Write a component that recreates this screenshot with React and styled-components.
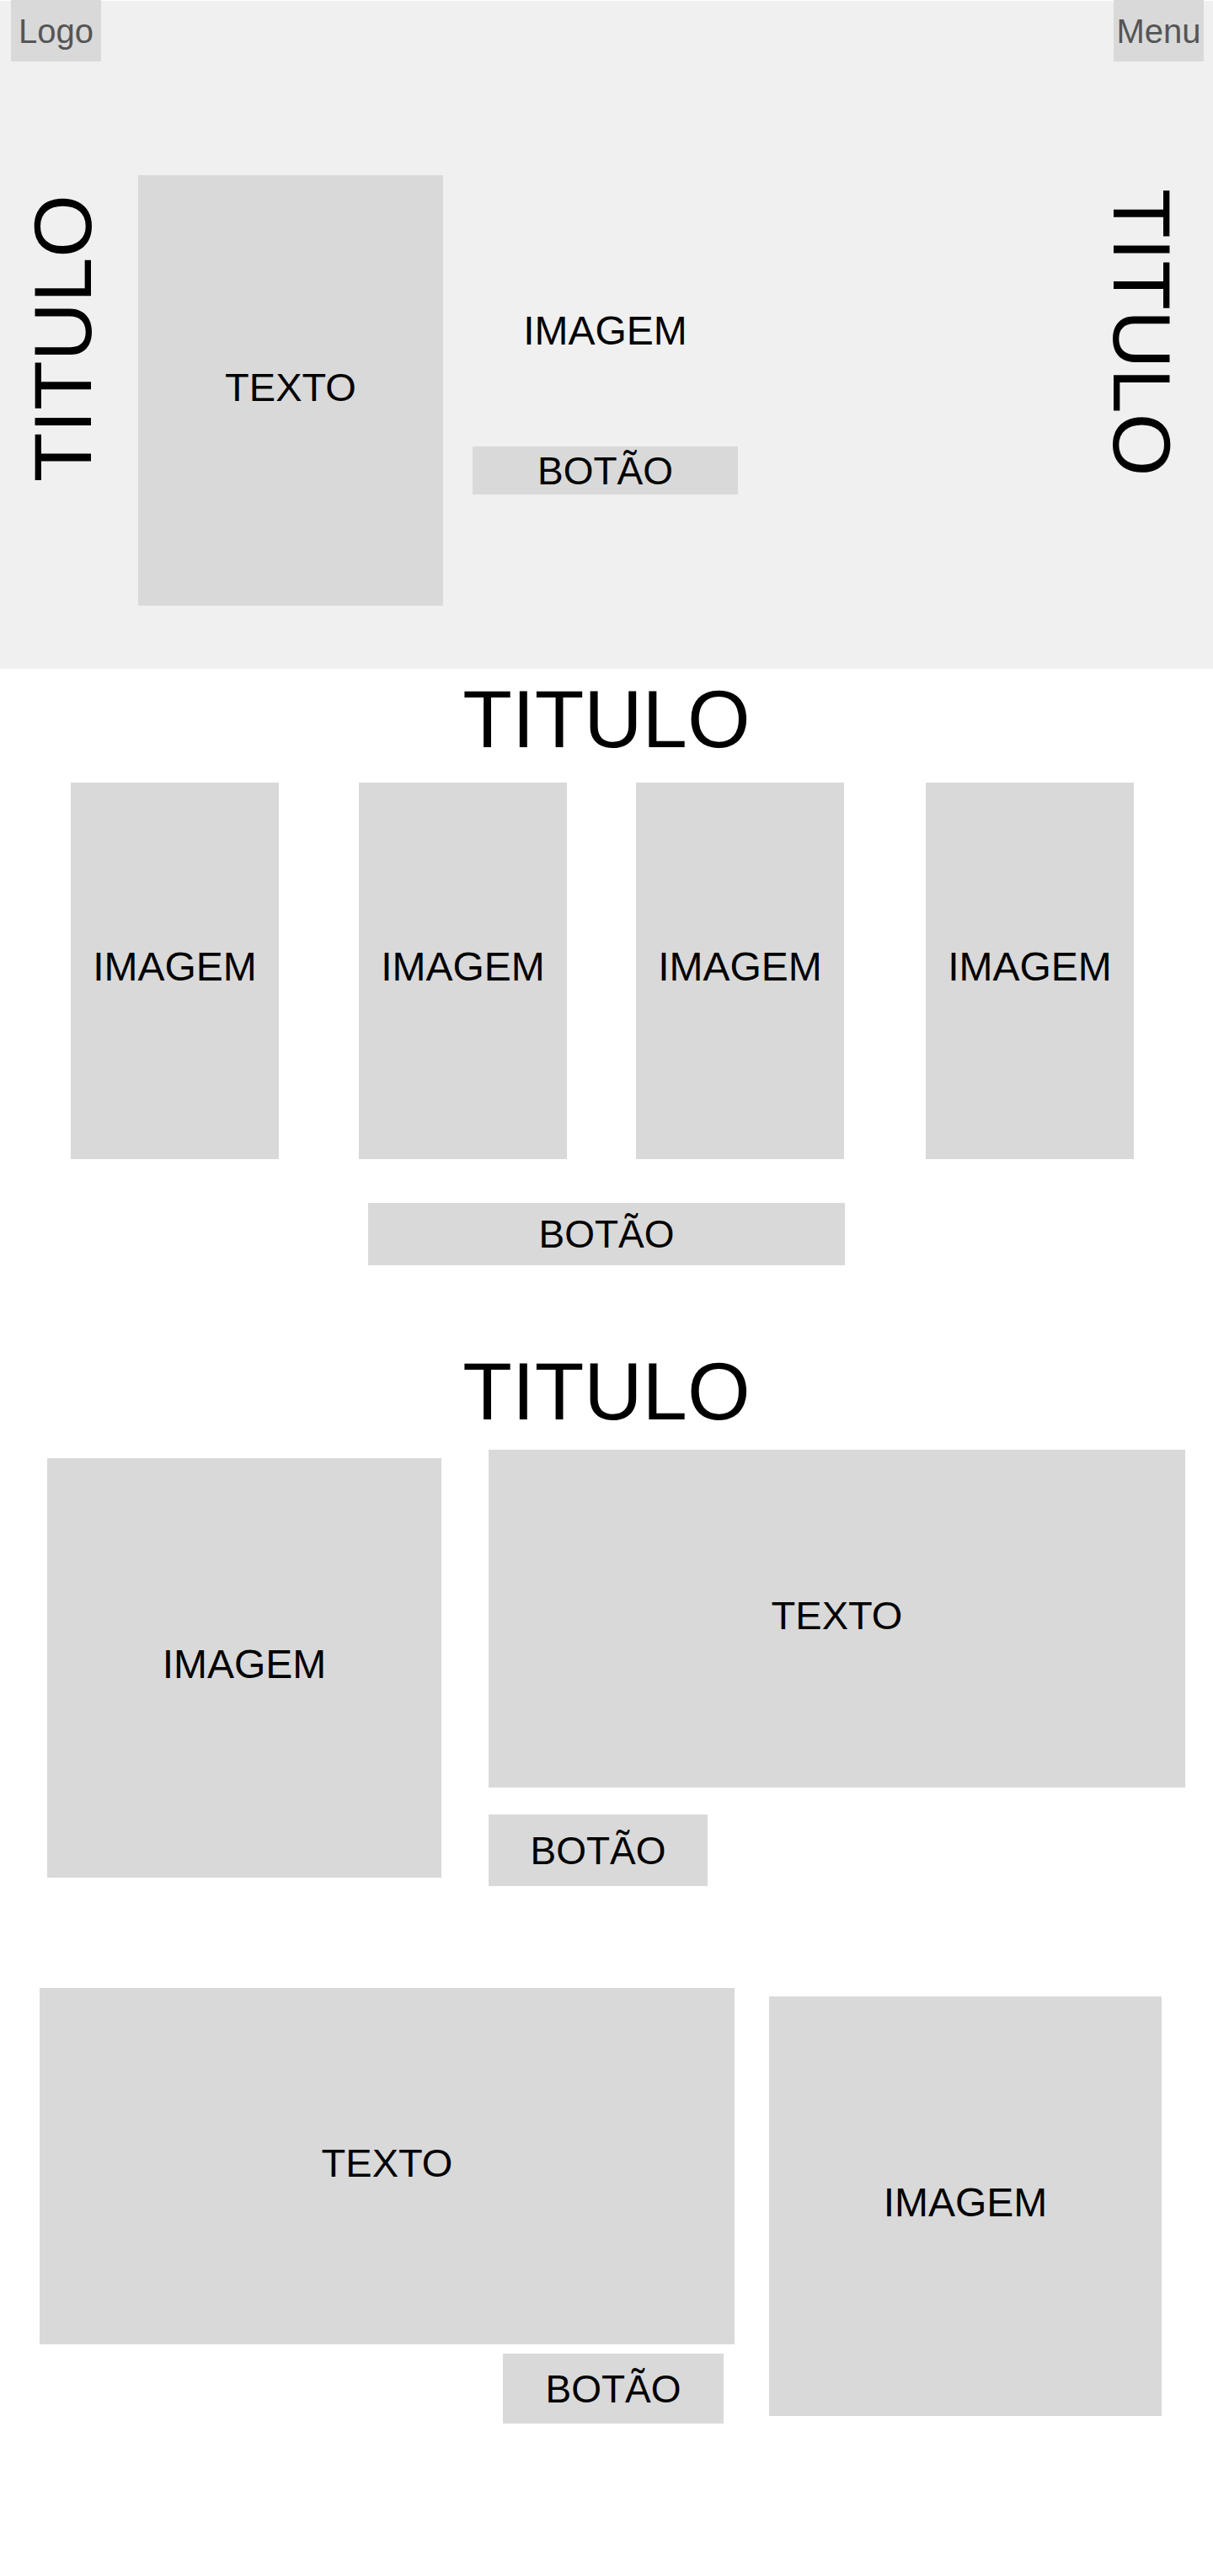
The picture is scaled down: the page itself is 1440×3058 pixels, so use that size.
import React from "react";
import styled, { createGlobalStyle } from "styled-components";

const GlobalStyle = createGlobalStyle`
  html, body {
    margin: 0;
    padding: 0;
    background: #ffffff;
  }
  body {
    font-family: "Liberation Sans", Arial, sans-serif;
    color: #000000;
  }
  *, *::before, *::after {
    box-sizing: border-box;
  }
`;

const Page = styled.div`
  width: 1440px;
  min-height: 3058px;
  background: #ffffff;
  display: flex;
  flex-direction: column;
`;

/* ---------- Hero ---------- */

const Hero = styled.section`
  height: 794px;
  background: #f0f0f0;
  border-top: 1px solid #ffffff;
  display: flex;
  flex-direction: column;
`;

const TopBar = styled.header`
  display: flex;
  justify-content: space-between;
  align-items: flex-start;
  padding: 0 11px 0 13px;
  margin-top: -1px;
`;

const NavBox = styled.div`
  width: 107px;
  height: 73px;
  background: #d9d9d9;
  color: #555555;
  font-size: 40px;
  line-height: 1;
  display: flex;
  align-items: center;
  justify-content: center;
`;

const HeroBody = styled.div`
  flex: 1;
  display: flex;
  align-items: flex-start;
  padding: 0 50px 0 40px;
`;

const SideTitle = styled.h1`
  margin: ${(p) => p.$top}px 0 0 ${(p) => (p.$end ? "auto" : "0")};
  font-size: 96px;
  font-weight: 400;
  line-height: 70px;
  writing-mode: vertical-rl;
  transform: ${(p) => (p.$flip ? "rotate(180deg)" : "none")};
  white-space: nowrap;
`;

const HeroCenter = styled.div`
  width: 315px;
  margin: 296px 0 0 35px;
  display: flex;
  flex-direction: column;
  align-items: center;
`;

const FreeLabel = styled.span`
  font-size: 48px;
  line-height: 1;
  white-space: nowrap;
`;

/* ---------- Shared blocks ---------- */

const Block = styled.div`
  flex: none;
  width: ${(p) => p.$w}px;
  height: ${(p) => p.$h}px;
  margin-top: ${(p) => p.$mt || 0}px;
  margin-left: ${(p) => p.$ml || 0}px;
  padding-bottom: 9px;
  background: #d9d9d9;
  display: flex;
  align-items: center;
  justify-content: center;
`;

const BlockLabel = styled.span`
  font-size: ${(p) => p.$size || 48}px;
  line-height: 1;
  white-space: nowrap;
`;

const Button = styled.button`
  flex: none;
  width: ${(p) => p.$w}px;
  height: ${(p) => p.$h}px;
  margin-top: ${(p) => p.$mt || 0}px;
  margin-left: ${(p) => p.$ml || 0}px;
  padding: 0;
  border: none;
  border-radius: 0;
  background: #d9d9d9;
  color: #000000;
  font-family: "Liberation Sans", Arial, sans-serif;
  font-size: 46px;
  line-height: 1;
  display: flex;
  align-items: center;
  justify-content: center;
  cursor: pointer;
`;

const SectionTitle = styled.h2`
  margin: ${(p) => p.$mt}px 0 0;
  font-size: 96px;
  font-weight: 400;
  line-height: 1;
  text-align: center;
  white-space: nowrap;
`;

/* ---------- Gallery ---------- */

const Gallery = styled.section`
  display: flex;
  flex-direction: column;
  align-items: stretch;
`;

const CardRow = styled.div`
  display: flex;
  align-items: flex-start;
  padding: 0 0 0 84px;
  margin-top: 27px;
`;

const CenterRow = styled.div`
  display: flex;
  justify-content: center;
`;

/* ---------- Feature rows ---------- */

const Feature = styled.section`
  display: flex;
  flex-direction: column;
`;

const FeatureRow = styled.div`
  display: flex;
  align-items: flex-start;
  gap: ${(p) => p.$gap}px;
  padding-left: ${(p) => p.$pl}px;
  margin-top: ${(p) => p.$mt}px;
`;

const Column = styled.div`
  display: flex;
  flex-direction: column;
  align-items: flex-start;
`;

const cards = [
  { label: "IMAGEM", gap: 0 },
  { label: "IMAGEM", gap: 95 },
  { label: "IMAGEM", gap: 82 },
  { label: "IMAGEM", gap: 97 },
];

export default function App() {
  return (
    <>
      <GlobalStyle />
      <Page>
        <Hero>
          <TopBar>
            <NavBox>Logo</NavBox>
            <NavBox>Menu</NavBox>
          </TopBar>
          <HeroBody>
            <SideTitle $flip $top={158}>
              TITULO
            </SideTitle>
            <Block $w={362} $h={511} $mt={135} $ml={54}>
              <BlockLabel $size={47}>TEXTO</BlockLabel>
            </Block>
            <HeroCenter>
              <FreeLabel>IMAGEM</FreeLabel>
              <Button $w={315} $h={57} $mt={113}>
                BOTÃO
              </Button>
            </HeroCenter>
            <SideTitle $end $top={151}>
              TITULO
            </SideTitle>
          </HeroBody>
        </Hero>

        <Gallery>
          <SectionTitle $mt={12}>TITULO</SectionTitle>
          <CardRow>
            {cards.map((c, i) => (
              <Block key={i} $w={247} $h={447} $ml={c.gap}>
                <BlockLabel>{c.label}</BlockLabel>
              </Block>
            ))}
          </CardRow>
          <CenterRow>
            <Button $w={566} $h={74} $mt={52}>
              BOTÃO
            </Button>
          </CenterRow>
        </Gallery>

        <Feature>
          <SectionTitle $mt={102}>TITULO</SectionTitle>
          <FeatureRow $gap={56} $pl={56} $mt={21}>
            <Block $w={468} $h={498} $mt={10}>
              <BlockLabel>IMAGEM</BlockLabel>
            </Block>
            <Column>
              <Block $w={827} $h={401}>
                <BlockLabel $size={47}>TEXTO</BlockLabel>
              </Block>
              <Button $w={260} $h={85} $mt={32}>
                BOTÃO
              </Button>
            </Column>
          </FeatureRow>
        </Feature>

        <Feature>
          <FeatureRow $gap={41} $pl={47} $mt={121}>
            <Column>
              <Block $w={825} $h={423}>
                <BlockLabel $size={47}>TEXTO</BlockLabel>
              </Block>
              <Button $w={262} $h={83} $mt={11} $ml={550}>
                BOTÃO
              </Button>
            </Column>
            <Block $w={466} $h={498} $mt={10}>
              <BlockLabel>IMAGEM</BlockLabel>
            </Block>
          </FeatureRow>
        </Feature>
      </Page>
    </>
  );
}
